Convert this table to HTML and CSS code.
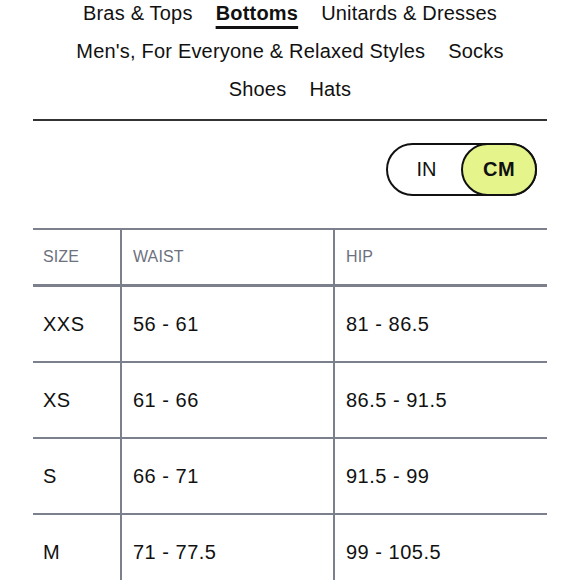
FILE: index.html
```html
<!DOCTYPE html>
<html lang="en">
<head>
<meta charset="utf-8">
<title>Size Guide</title>
<link rel="stylesheet" href="styles.css">
</head>
<body>
<nav class="cats">
  <a class="cat">Bras &amp; Tops</a>
  <a class="cat active">Bottoms</a>
  <a class="cat">Unitards &amp; Dresses</a>
  <a class="cat">Men's, For Everyone &amp; Relaxed Styles</a>
  <a class="cat">Socks</a>
  <a class="cat">Shoes</a>
  <a class="cat">Hats</a>
</nav>
<hr class="divider">
<div class="unit-row">
  <div class="toggle">
    <span class="opt">IN</span>
    <span class="opt on">CM</span>
  </div>
</div>
<table class="sizes">
  <thead>
    <tr><th class="c1">SIZE</th><th class="c2">WAIST</th><th>HIP</th></tr>
  </thead>
  <tbody>
    <tr><td>XXS</td><td>56 - 61</td><td>81 - 86.5</td></tr>
    <tr><td>XS</td><td>61 - 66</td><td>86.5 - 91.5</td></tr>
    <tr><td>S</td><td>66 - 71</td><td>91.5 - 99</td></tr>
    <tr><td>M</td><td>71 - 77.5</td><td>99 - 105.5</td></tr>
  </tbody>
</table>
</body>
</html>
```
FILE: styles.css
```css
html, body {
  margin: 0;
  padding: 0;
  background: #fff;
}
body {
  font-family: "Liberation Sans", Arial, sans-serif;
  color: #111;
  width: 580px;
  overflow: hidden;
}
.cats {
  display: flex;
  flex-wrap: wrap;
  justify-content: center;
  column-gap: 23px;
  row-gap: 12px;
  width: 480px;
  margin: 0 auto;
  font-size: 20px;
  line-height: 26px;
  letter-spacing: 0.2px;
}
.cat {
  color: #111;
  white-space: nowrap;
}
.cat.active {
  font-weight: bold;
  text-decoration: underline;
  text-decoration-thickness: 3px;
  text-underline-offset: 6px;
}
.divider {
  border: 0;
  height: 2px;
  background: #333;
  margin: 17px 33px 0;
}
.unit-row {
  display: flex;
  justify-content: flex-end;
  padding: 22px 43px 0 0;
}
.toggle {
  display: flex;
  width: 147px;
  height: 49px;
  border: 2px solid #111;
  border-radius: 27px;
  font-size: 20px;
}
.opt {
  flex: 1;
  display: flex;
  align-items: center;
  justify-content: center;
  padding-left: 4px;
}
.opt.on {
  flex: 0 0 72px;
  padding-left: 0;
  background: #e5f58b;
  border-radius: 27px;
  margin: -2px -2px -2px 0;
  border: 2px solid #111;
  font-weight: bold;
  letter-spacing: 0.5px;
}
.sizes {
  margin: 32px 33px 0;
  width: 514px;
  border-collapse: collapse;
}
.sizes th, .sizes td {
  text-align: left;
  border-top: 2px solid #7b808c;
  border-left: 2px solid #7b808c;
  padding: 0 0 0 11px;
}
.sizes th:first-child, .sizes td:first-child {
  border-left: 0;
  padding-left: 10px;
}
.sizes th {
  height: 54px;
  font-weight: normal;
  font-size: 16px;
  color: #6d717e;
  letter-spacing: 0.1px;
}
.sizes thead tr {
  border-bottom: 3px solid #7b808c;
}
.sizes td {
  height: 74px;
  font-size: 20px;
  letter-spacing: 0.5px;
  color: #111;
}
.c1 { width: 77px; }
.c2 { width: 200px; }
```
